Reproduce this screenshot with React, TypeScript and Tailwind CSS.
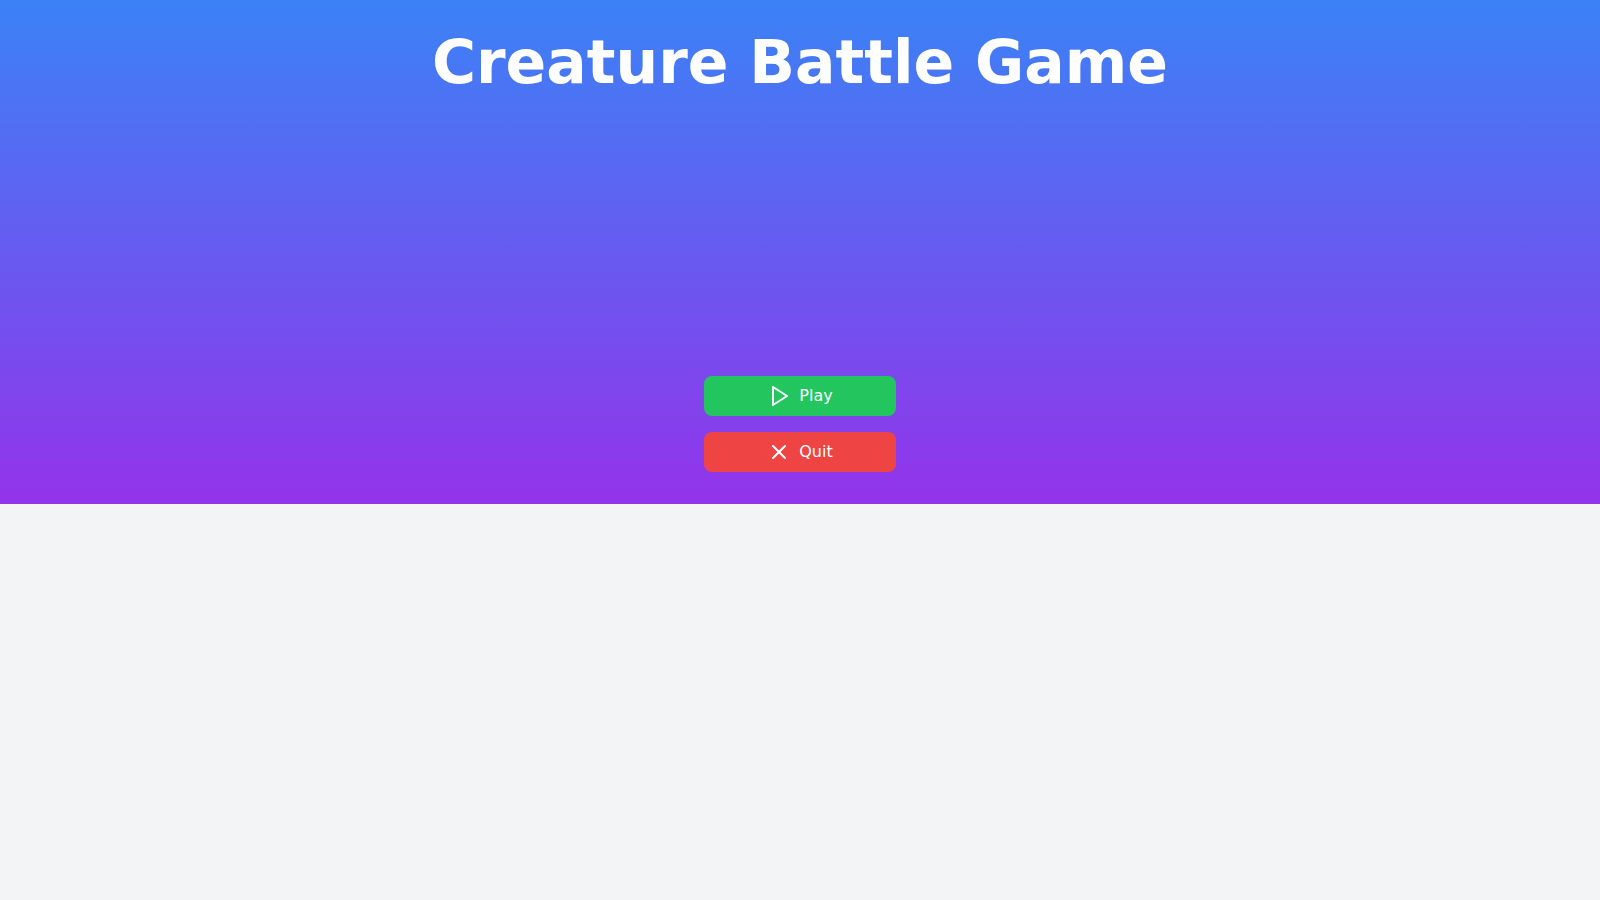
import React from "react";

function PlayIcon() {
  return (
    <svg width="24" height="24" viewBox="0 0 24 24" fill="none" stroke="currentColor" strokeWidth="2" strokeLinecap="round" strokeLinejoin="round">
      <polygon points="6 3 20 12 6 21 6 3" />
    </svg>
  );
}

function XIcon() {
  return (
    <svg width="24" height="24" viewBox="0 0 24 24" fill="none" stroke="currentColor" strokeWidth="2" strokeLinecap="round" strokeLinejoin="round">
      <path d="M18 6 6 18" />
      <path d="m6 6 12 12" />
    </svg>
  );
}

export default function App() {
  return (
    <div className="min-h-[900px] bg-[#f3f4f6]" style={{ fontFamily: '"DejaVu Sans", sans-serif' }}>
      <div className="h-[504px] bg-[linear-gradient(to_bottom,#3b82f6,#9333ea)] flex flex-col items-center px-8 pt-8 pb-8">
        <h1 className="text-6xl leading-none font-bold text-white">Creature Battle Game</h1>
        <div className="flex-1 flex flex-col justify-end gap-4">
          <button className="w-48 h-10 rounded-lg bg-[#22c55e] text-white flex items-center justify-center gap-2 text-base">
            <PlayIcon />
            <span>Play</span>
          </button>
          <button className="w-48 h-10 rounded-lg bg-[#ef4444] text-white flex items-center justify-center gap-2 text-base">
            <XIcon />
            <span>Quit</span>
          </button>
        </div>
      </div>
    </div>
  );
}
